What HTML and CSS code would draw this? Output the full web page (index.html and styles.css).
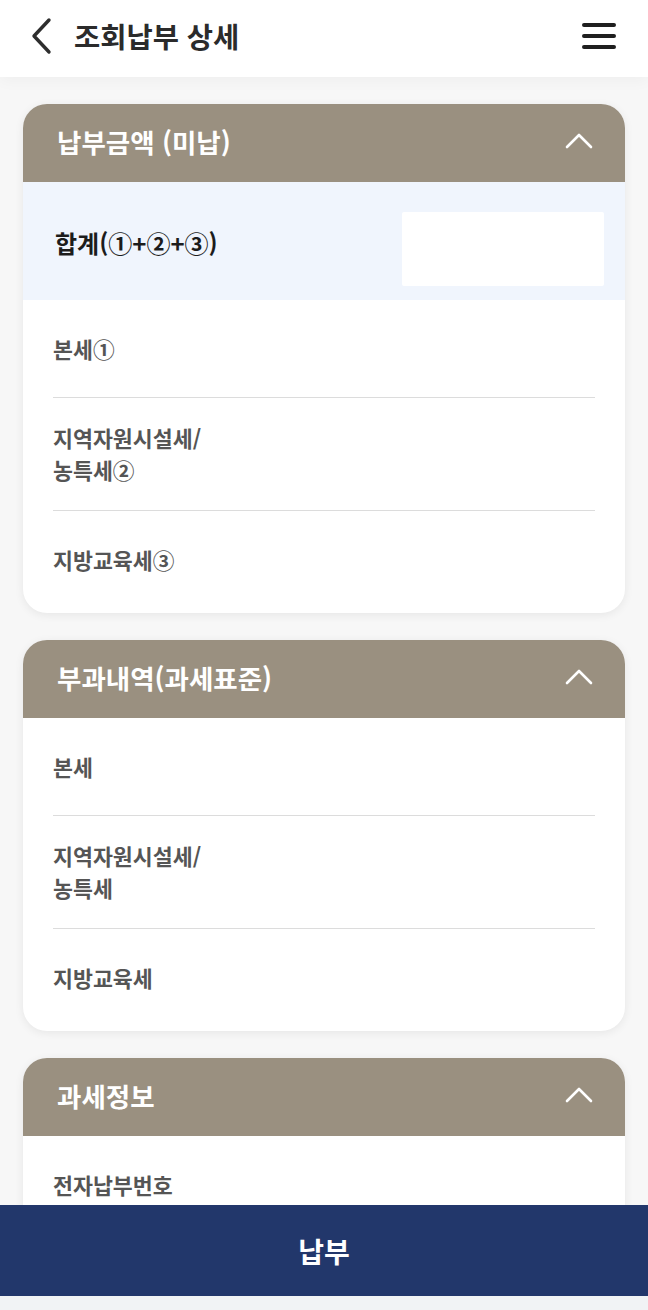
FILE: index.html
```html
<!DOCTYPE html>
<html lang="ko">

<head>
    <meta charset="UTF-8">
    <meta name="viewport" content="width=device-width, initial-scale=1.0">
    <title>조회납부 상세</title>
    <link rel="stylesheet" href="styles.css">
</head>

<body>
    <header class="topbar">
        <div class="topbar-left">
            <button class="icon-btn back-btn" aria-label="뒤로">
                <svg width="24" height="40" viewBox="0 0 24 40">
                    <path d="M19 4 L4 20 L19 36" fill="none" stroke="#2e2e2e" stroke-width="3.4" stroke-linecap="round" stroke-linejoin="round" />
                </svg>
            </button>
            <h1 class="page-title">조회납부 상세</h1>
        </div>
        <button class="icon-btn menu-btn" aria-label="메뉴">
            <svg width="34" height="28" viewBox="0 0 34 28">
                <path d="M2 3 H32 M2 14 H32 M2 25 H32" stroke="#1f1f1f" stroke-width="4" stroke-linecap="round" />
            </svg>
        </button>
    </header>

    <main class="content">
        <section class="panel">
            <div class="panel-head">
                <h2>납부금액 (미납)</h2>
                <svg class="chevron" width="28" height="16" viewBox="0 0 28 16">
                    <path d="M2 14 L14 2 L26 14" fill="none" stroke="#fff" stroke-width="2.6" stroke-linecap="round" stroke-linejoin="round" />
                </svg>
            </div>
            <div class="total-row">
                <span class="total-label">합계(①+②+③)</span>
                <div class="total-value"></div>
            </div>
            <ul class="rows">
                <li class="row">본세①</li>
                <li class="row">지역자원시설세/<br>농특세②</li>
                <li class="row">지방교육세③</li>
            </ul>
        </section>

        <section class="panel">
            <div class="panel-head">
                <h2>부과내역(과세표준)</h2>
                <svg class="chevron" width="28" height="16" viewBox="0 0 28 16">
                    <path d="M2 14 L14 2 L26 14" fill="none" stroke="#fff" stroke-width="2.6" stroke-linecap="round" stroke-linejoin="round" />
                </svg>
            </div>
            <ul class="rows">
                <li class="row">본세</li>
                <li class="row">지역자원시설세/<br>농특세</li>
                <li class="row">지방교육세</li>
            </ul>
        </section>

        <section class="panel">
            <div class="panel-head">
                <h2>과세정보</h2>
                <svg class="chevron" width="28" height="16" viewBox="0 0 28 16">
                    <path d="M2 14 L14 2 L26 14" fill="none" stroke="#fff" stroke-width="2.6" stroke-linecap="round" stroke-linejoin="round" />
                </svg>
            </div>
            <ul class="rows">
                <li class="row">전자납부번호</li>
                <li class="row">납부기한</li>
            </ul>
        </section>
    </main>

    <footer class="pay-bar">
        <button class="pay-btn">납부</button>
    </footer>
</body>

</html>
```

FILE: styles.css
```css
:root {
    --bg: #f7f7f7;
    --panel-head: #9a9080;
    --total-bg: #f0f5fd;
    --navy: #22376b;
    --text: #222;
    --label: #555;
    --line: #dcdcdc;
}

* {
    box-sizing: border-box;
}

body {
    font-family: 'Noto Sans CJK KR', 'Noto Sans', sans-serif;
    color: var(--text);
    background-color: var(--bg);
    margin: 0;
    padding: 0;
}

.topbar {
    height: 77px;
    display: flex;
    align-items: center;
    justify-content: space-between;
    padding: 0 32px 0 30px;
    background: white;
    box-shadow: 0 4px 14px rgba(0, 0, 0, 0.035);
    position: relative;
}

.topbar-left {
    display: flex;
    align-items: center;
    gap: 20px;
    margin-top: -6px;
}

.icon-btn {
    background: none;
    border: none;
    padding: 0;
    display: flex;
    cursor: pointer;
}

.menu-btn {
    margin-top: -6px;
}

.page-title {
    margin: 0;
    font-size: 28.5px;
    font-weight: 700;
    color: #2b2b2b;
}

.content {
    padding: 27px 23px 140px;
    display: flex;
    flex-direction: column;
    gap: 27px;
}

.panel {
    background: white;
    border-radius: 24px;
    overflow: hidden;
    box-shadow: 0 2px 10px rgba(0, 0, 0, 0.07);
    padding-bottom: 4px;
}

.panel-head {
    height: 78px;
    background-color: var(--panel-head);
    display: flex;
    align-items: center;
    justify-content: space-between;
    padding: 0 32px 4px 34px;
}

.panel-head h2 {
    margin: 0;
    font-size: 26.5px;
    font-weight: 700;
    color: white;
}

.chevron {
    display: block;
}

.total-row {
    background-color: var(--total-bg);
    display: flex;
    align-items: center;
    justify-content: space-between;
    padding: 30px 21px 14px 32px;
}

.total-label {
    font-size: 24px;
    font-weight: 700;
    color: #1c1c1c;
    margin-top: -14px;
}

.total-value {
    width: 202px;
    height: 74px;
    background: white;
    border-radius: 2px;
}

.rows {
    list-style: none;
    margin: 0;
    padding: 0 30px;
}

.row {
    min-height: 98px;
    padding: 24px 0;
    display: flex;
    align-items: center;
    font-size: 21.7px;
    font-weight: 700;
    line-height: 32px;
    color: var(--label);
    border-bottom: 1px solid var(--line);
}

.row:last-child {
    border-bottom: none;
}

.pay-bar {
    position: fixed;
    left: 0;
    right: 0;
    bottom: 0;
    padding-bottom: 14px;
    background-color: #f1f3f5;
}

.pay-btn {
    display: block;
    width: 100%;
    height: 91px;
    border: none;
    background-color: var(--navy);
    color: white;
    font-family: inherit;
    font-size: 28px;
    font-weight: 700;
    cursor: pointer;
}
```
